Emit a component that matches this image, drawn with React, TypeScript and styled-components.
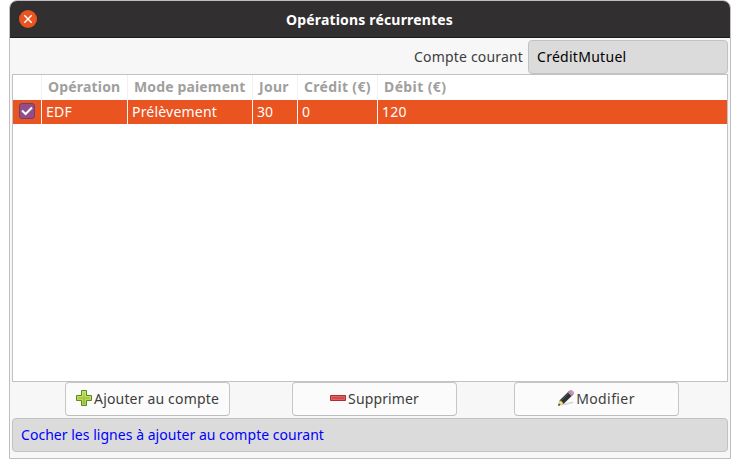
import React from 'react';
import styled, { createGlobalStyle } from 'styled-components';

const GlobalStyle = createGlobalStyle`
  * { box-sizing: border-box; }
  html, body { margin: 0; background: #fff; }
  body { height: 468px; overflow: hidden; font: 400 14px/20px "Noto Sans", "Open Sans", sans-serif; color: #3d3d3d; }
  svg { display: block; flex: none; }
`;

const Window = styled.main`
  width: 722px;
  height: 459px;
  margin-left: 9px;
  display: flex;
  flex-direction: column;
  overflow: hidden;
  background: #f7f7f7;
  border: 1px solid #bfbfbf;
  border-radius: 8px 8px 0 0;
`;

const TitleBar = styled.header`
  flex: none;
  height: 37px;
  display: grid;
  grid-template-columns: 36px 1fr 36px;
  align-items: center;
  background: #322f30;
  border-bottom: 1px solid #1c1a1b;
`;

const Title = styled.h1`
  margin: 0;
  padding: 1px 1px 0 0;
  text-align: center;
  color: #fff;
  font-size: 14px;
  line-height: 20px;
  font-weight: 700;
`;

const CloseButton = styled.button`
  width: 18px;
  height: 18px;
  margin-left: 9px;
  padding: 0;
  display: grid;
  place-items: center;
  border: 0;
  border-radius: 50%;
  background: #e95420;
`;

const Text = styled.span<{ $spacing?: number }>`
  white-space: pre;
  letter-spacing: ${({ $spacing = 0 }) => $spacing}px;
`;

const Body = styled.section`
  flex: 1;
  display: flex;
  flex-direction: column;
  padding: 2px 2px 6px;
`;

const AccountRow = styled.div`
  flex: none;
  height: 34px;
  display: flex;
  justify-content: flex-end;
  align-items: center;
  gap: 5px;
`;

const Field = styled.div`
  height: 34px;
  display: flex;
  align-items: center;
  padding: 0 8px;
  border: 1px solid #c2c2c2;
  border-radius: 4px;
  background: #dbdbdb;
`;

const AccountField = styled(Field)`
  width: 200px;
  color: #000;
`;

const StatusField = styled(Field)`
  margin-top: 2px;
  color: #0000ff;
`;

const Table = styled.div`
  height: 308px;
  flex: none;
  background: #fff;
  border: 1px solid #c2c2c2;
`;

const Row = styled.div`
  display: grid;
  grid-template-columns: 29px 86px 125px 45px 80px 1fr;
`;

const HeaderRow = styled(Row)`
  height: 25px;
  color: #a09f9e;
  font-weight: 700;
`;

const SelectedRow = styled(Row)`
  height: 24px;
  background: #e95420;
  color: #fff;
`;

const HeaderCell = styled.div`
  display: flex;
  align-items: center;
  padding: 0 0 2px 6px;
  border-right: 1px solid #f1f1f1;
  &:last-child { border-right: 0; }
`;

const Cell = styled.div`
  display: flex;
  align-items: center;
  padding-left: 4px;
  border-right: 1px solid #fbf3f0;
  &:last-child { border-right: 0; }
`;

const CheckBox = styled.span`
  width: 16px;
  height: 16px;
  margin-left: 2px;
  margin-bottom: 2px;
  display: grid;
  place-items: center;
  border: 1px solid #743e6b;
  border-radius: 3px;
  background: #924d8b;
`;

const Actions = styled.div`
  flex: none;
  height: 34px;
  display: flex;
  padding-left: 53px;
`;

const ActionButton = styled.button<{ $gap: number }>`
  width: 165px;
  height: 34px;
  margin-right: ${({ $gap }) => $gap}px;
  padding: 0 0 1px;
  display: flex;
  align-items: center;
  justify-content: center;
  gap: 2px;
  border: 1px solid #c6c6c6;
  border-bottom-color: #bdbdbd;
  border-radius: 4px;
  background: #fbfbfb;
  color: #3d3d3d;
  font: inherit;

  svg { margin-bottom: 1px; }
`;

const CloseIcon = () => (
  <svg width="10" height="10" viewBox="0 0 10 10">
    <path d="M1.3 1.3 8.7 8.7M8.7 1.3 1.3 8.7" stroke="#fff" strokeWidth="1.4" />
  </svg>
);

const CheckIcon = () => (
  <svg width="14" height="14" viewBox="0 0 14 14">
    <path d="M2 6.5 5.6 10 12 3.5" fill="none" stroke="#fff" strokeWidth="2" />
  </svg>
);

const AddIcon = () => (
  <svg width="16" height="16" viewBox="0 0 16 16">
    <defs>
      <linearGradient id="add-fill" x1="0" y1="0" x2="0" y2="1">
        <stop offset="0" stopColor="#c3dc69" />
        <stop offset=".55" stopColor="#a5c83a" />
        <stop offset="1" stopColor="#8eb52c" />
      </linearGradient>
    </defs>
    <path d="M5.5.5h5v5h5v5h-5v5h-5v-5h-5v-5h5z" fill="url(#add-fill)" stroke="#5b8b1e" />
    <path d="M6.5 1.5h3v5h5v3h-5v5h-3v-5h-5v-3h5z" fill="none" stroke="#d7e995" strokeOpacity=".5" />
  </svg>
);

const RemoveIcon = () => (
  <svg width="16" height="16" viewBox="0 0 16 16">
    <path d="M.5 5.5h15v5H.5z" fill="#d9534f" stroke="#a82f32" />
    <path d="M1.5 6.5h13v3h-13z" fill="#d84a49" stroke="#df6562" />
  </svg>
);

const PencilIcon = () => (
  <svg width="16" height="16" viewBox="0 0 16 16">
    <path d="M4 14.2 14.5 11.5 15.5 13 7 15z" fill="#aaa" opacity=".45" />
    <path d="M1.8 10.6 11.2 1.3 14.7 4.7 5.2 14z" fill="#303335" stroke="#1e2022" strokeWidth=".5" />
    <path d="M3.2 10.8 11.4 2.7" stroke="#5b5f61" strokeWidth=".8" />
    <path d="M10.6 1.9 12 .7C14-.1 16.2 2 15.3 4L14.1 5.4z" fill="#dc91cb" stroke="#9f6592" strokeWidth=".6" />
    <path d="M10.2 2.3 13.7 5.8" stroke="#b9b9b9" />
    <path d="M1.6 10.8.4 15.5 5.2 14.1C4.9 12.2 3.6 11 1.6 10.8z" fill="#eee17a" stroke="#b5a75b" strokeWidth=".5" />
    <path d="M.8 13.6.2 15.8 2.5 15.1z" fill="#222" />
  </svg>
);

const columns = [
  { label: 'Opération', spacing: 0.18 },
  { label: 'Mode paiement', spacing: 0.14 },
  { label: 'Jour', spacing: 0.25 },
  { label: 'Crédit (€)', spacing: 0.32 },
  { label: 'Débit (€)', spacing: 0.38 },
];

const values = [
  { label: 'EDF', spacing: 0.2 },
  { label: 'Prélèvement', spacing: 0.2 },
  { label: '30', spacing: 0 },
  { label: '0', spacing: 0 },
  { label: '120', spacing: 0.2 },
];

const actions = [
  { label: 'Ajouter au compte', icon: <AddIcon />, spacing: 0.17, gap: 62 },
  { label: 'Supprimer', icon: <RemoveIcon />, spacing: 0.12, gap: 57 },
  { label: 'Modifier', icon: <PencilIcon />, spacing: 0.4, gap: 0 },
];

export default function App() {
  return (
    <>
      <GlobalStyle />
      <Window>
        <TitleBar>
          <CloseButton aria-label="Fermer"><CloseIcon /></CloseButton>
          <Title><Text $spacing={0.17}>Opérations récurrentes</Text></Title>
        </TitleBar>
        <Body>
          <AccountRow>
            <Text $spacing={0.17}>Compte courant</Text>
            <AccountField><Text $spacing={0.28}>CréditMutuel</Text></AccountField>
          </AccountRow>
          <Table>
            <HeaderRow>
              <HeaderCell />
              {columns.map((column) => (
                <HeaderCell key={column.label}><Text $spacing={column.spacing}>{column.label}</Text></HeaderCell>
              ))}
            </HeaderRow>
            <SelectedRow>
              <Cell><CheckBox><CheckIcon /></CheckBox></Cell>
              {values.map((value) => (
                <Cell key={value.label}><Text $spacing={value.spacing}>{value.label}</Text></Cell>
              ))}
            </SelectedRow>
          </Table>
          <Actions>
            {actions.map((action) => (
              <ActionButton key={action.label} $gap={action.gap}>
                {action.icon}
                <Text $spacing={action.spacing}>{action.label}</Text>
              </ActionButton>
            ))}
          </Actions>
          <StatusField><Text $spacing={0.03}>Cocher les lignes à ajouter au compte courant</Text></StatusField>
        </Body>
      </Window>
    </>
  );
}
